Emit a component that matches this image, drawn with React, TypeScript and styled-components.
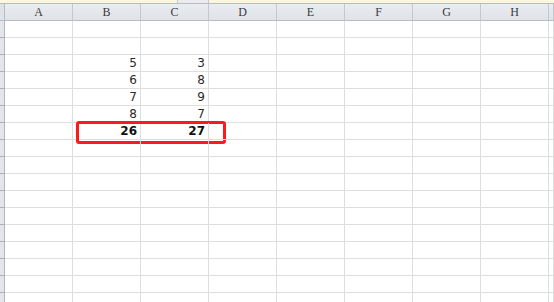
import styled, { createGlobalStyle } from "styled-components";

const GlobalStyle = createGlobalStyle`
  html, body {
    margin: 0;
    padding: 0;
    background: #ffffff;
    overflow: hidden;
  }
`;

const COLUMNS = ["A", "B", "C", "D", "E", "F", "G", "H"];
const ROW_COUNT = 17;

// values sitting in columns B and C
const data: Record<number, [string, string]> = {
  3: ["5", "3"],
  4: ["6", "8"],
  5: ["7", "9"],
  6: ["8", "7"],
  7: ["26", "27"],
};
const TOTAL_ROW = 7;

const Page = styled.div`
  width: 554px;
  height: 302px;
  display: flex;
  flex-direction: column;
  overflow: hidden;
`;

const TopStrip = styled.div`
  height: 3px;
  flex: none;
  display: flex;
  background: #fbf6de;
  border-bottom: 1px solid #b9bcc1;
`;

const StripTab = styled.div`
  margin-left: 177px;
  width: 30px;
  background: #e9ebee;
  border-left: 1px solid #c3c6cb;
  border-right: 1px solid #c3c6cb;
`;

const Sheet = styled.div`
  display: grid;
  grid-template-columns: 5px repeat(8, 68px) 1fr;
  grid-auto-rows: 17px;
  font-family: "DejaVu Sans", "Liberation Sans", sans-serif;
`;

const Corner = styled.div`
  background: #dfe3e8;
  border-right: 1px solid #b5bcc6;
  border-bottom: 1px solid #b5bcc6;
`;

const ColHead = styled.div`
  display: flex;
  align-items: center;
  justify-content: center;
  background: linear-gradient(#e9ecf0, #dfe3e8);
  border-right: 1px solid #c2c8d0;
  border-bottom: 1px solid #b5bcc6;
  font-family: "Liberation Serif", "DejaVu Serif", serif;
  font-size: 12px;
  color: #3b3b3b;
  padding-top: 1px;
`;

const RowHead = styled.div`
  background: #e2e6eb;
  border-right: 1px solid #aeb5bf;
  border-bottom: 1px solid #a9b0ba;
`;

const Cell = styled.div<{ $bold?: boolean }>`
  position: relative;
  display: flex;
  align-items: flex-end;
  justify-content: flex-end;
  padding: 0 3px 1px 0;
  border-right: 1px solid #dcdee0;
  border-bottom: 1px solid #dcdee0;
  font-size: 12px;
  line-height: 14px;
  font-weight: ${(p) => (p.$bold ? 700 : 400)};
  color: ${(p) => (p.$bold ? "#111111" : "#2a2a2a")};
`;

const Highlight = styled.div`
  position: absolute;
  left: 3px;
  top: -2px;
  width: 150px;
  height: 23px;
  box-sizing: border-box;
  border: 3px solid #ff1a1a;
  border-radius: 3px;
  pointer-events: none;
`;

export default function App() {
  const rows = Array.from({ length: ROW_COUNT }, (_, i) => i + 1);
  return (
    <>
      <GlobalStyle />
      <Page>
        <TopStrip>
          <StripTab />
        </TopStrip>
        <Sheet>
          <Corner />
          {COLUMNS.map((c) => (
            <ColHead key={c}>{c}</ColHead>
          ))}
          <ColHead />
          {rows.map((r) => {
            const values = data[r];
            const bold = r === TOTAL_ROW;
            return [
              <RowHead key={`h${r}`} />,
              ...COLUMNS.map((c, ci) => {
                const value = values && (ci === 1 ? values[0] : ci === 2 ? values[1] : "");
                return (
                  <Cell key={`${c}${r}`} $bold={bold}>
                    {value}
                    {bold && ci === 1 && <Highlight />}
                  </Cell>
                );
              }),
              <Cell key={`x${r}`} />,
            ];
          })}
        </Sheet>
      </Page>
    </>
  );
}
